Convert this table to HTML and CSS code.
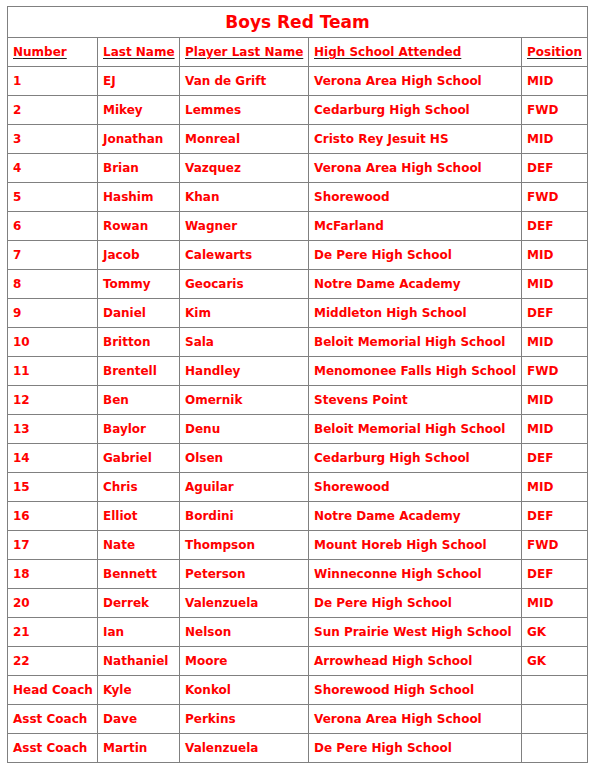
FILE: index.html
```html
<!DOCTYPE html>
<html>
<head>
<meta charset="utf-8">
<link rel="stylesheet" href="styles.css">
</head>
<body>
<table class="roster">
<colgroup>
<col class="c1"><col class="c2"><col class="c3"><col class="c4"><col class="c5">
</colgroup>
<tr><td class="title" colspan="5">Boys Red Team</td></tr>
<tr class="head"><td><u>Number</u></td><td><u>Last Name</u></td><td><u>Player Last Name</u></td><td><u>High School Attended</u></td><td><u>Position</u></td></tr>
<tr><td>1</td><td>EJ</td><td>Van de Grift</td><td>Verona Area High School</td><td>MID</td></tr>
<tr><td>2</td><td>Mikey</td><td>Lemmes</td><td>Cedarburg High School</td><td>FWD</td></tr>
<tr><td>3</td><td>Jonathan</td><td>Monreal</td><td>Cristo Rey Jesuit HS</td><td>MID</td></tr>
<tr><td>4</td><td>Brian</td><td>Vazquez</td><td>Verona Area High School</td><td>DEF</td></tr>
<tr><td>5</td><td>Hashim</td><td>Khan</td><td>Shorewood</td><td>FWD</td></tr>
<tr><td>6</td><td>Rowan</td><td>Wagner</td><td>McFarland</td><td>DEF</td></tr>
<tr><td>7</td><td>Jacob</td><td>Calewarts</td><td>De Pere High School</td><td>MID</td></tr>
<tr><td>8</td><td>Tommy</td><td>Geocaris</td><td>Notre Dame Academy</td><td>MID</td></tr>
<tr><td>9</td><td>Daniel</td><td>Kim</td><td>Middleton High School</td><td>DEF</td></tr>
<tr><td>10</td><td>Britton</td><td>Sala</td><td>Beloit Memorial High School</td><td>MID</td></tr>
<tr><td>11</td><td>Brentell</td><td>Handley</td><td>Menomonee Falls High School</td><td>FWD</td></tr>
<tr><td>12</td><td>Ben</td><td>Omernik</td><td>Stevens Point</td><td>MID</td></tr>
<tr><td>13</td><td>Baylor</td><td>Denu</td><td>Beloit Memorial High School</td><td>MID</td></tr>
<tr><td>14</td><td>Gabriel</td><td>Olsen</td><td>Cedarburg High School</td><td>DEF</td></tr>
<tr><td>15</td><td>Chris</td><td>Aguilar</td><td>Shorewood</td><td>MID</td></tr>
<tr><td>16</td><td>Elliot</td><td>Bordini</td><td>Notre Dame Academy</td><td>DEF</td></tr>
<tr><td>17</td><td>Nate</td><td>Thompson</td><td>Mount Horeb High School</td><td>FWD</td></tr>
<tr><td>18</td><td>Bennett</td><td>Peterson</td><td>Winneconne High School</td><td>DEF</td></tr>
<tr><td>20</td><td>Derrek</td><td>Valenzuela</td><td>De Pere High School</td><td>MID</td></tr>
<tr><td>21</td><td>Ian</td><td>Nelson</td><td>Sun Prairie West High School</td><td>GK</td></tr>
<tr><td>22</td><td>Nathaniel</td><td>Moore</td><td>Arrowhead High School</td><td>GK</td></tr>
<tr><td>Head Coach</td><td>Kyle</td><td>Konkol</td><td>Shorewood High School</td><td></td></tr>
<tr><td>Asst Coach</td><td>Dave</td><td>Perkins</td><td>Verona Area High School</td><td></td></tr>
<tr><td>Asst Coach</td><td>Martin</td><td>Valenzuela</td><td>De Pere High School</td><td></td></tr>
</table>
</body>
</html>
```
FILE: styles.css
```css
html, body { margin: 0; padding: 0; background: #fff; }
body { padding: 6px 0 0 7px; }
.roster {
  border-collapse: collapse;
  table-layout: fixed;
  width: 580px;
  font-family: Tahoma, "DejaVu Sans", Verdana, sans-serif;
  font-weight: bold;
  font-size: 12px;
  color: #ff0000;
}
.c1 { width: 90px; }
.c2 { width: 82px; }
.c3 { width: 129px; }
.c4 { width: 213px; }
.c5 { width: 66px; }
.roster td {
  border: 1px solid #808080;
  padding: 0 0 0 5px;
  vertical-align: middle;
  white-space: nowrap;
  overflow: hidden;
  box-sizing: border-box;
  height: 29px;
}
.roster td.title {
  text-align: center;
  font-size: 17px;
  height: 31px;
  padding: 0;
}
.roster u { text-decoration-color: #222; text-underline-offset: 2px; }
```
